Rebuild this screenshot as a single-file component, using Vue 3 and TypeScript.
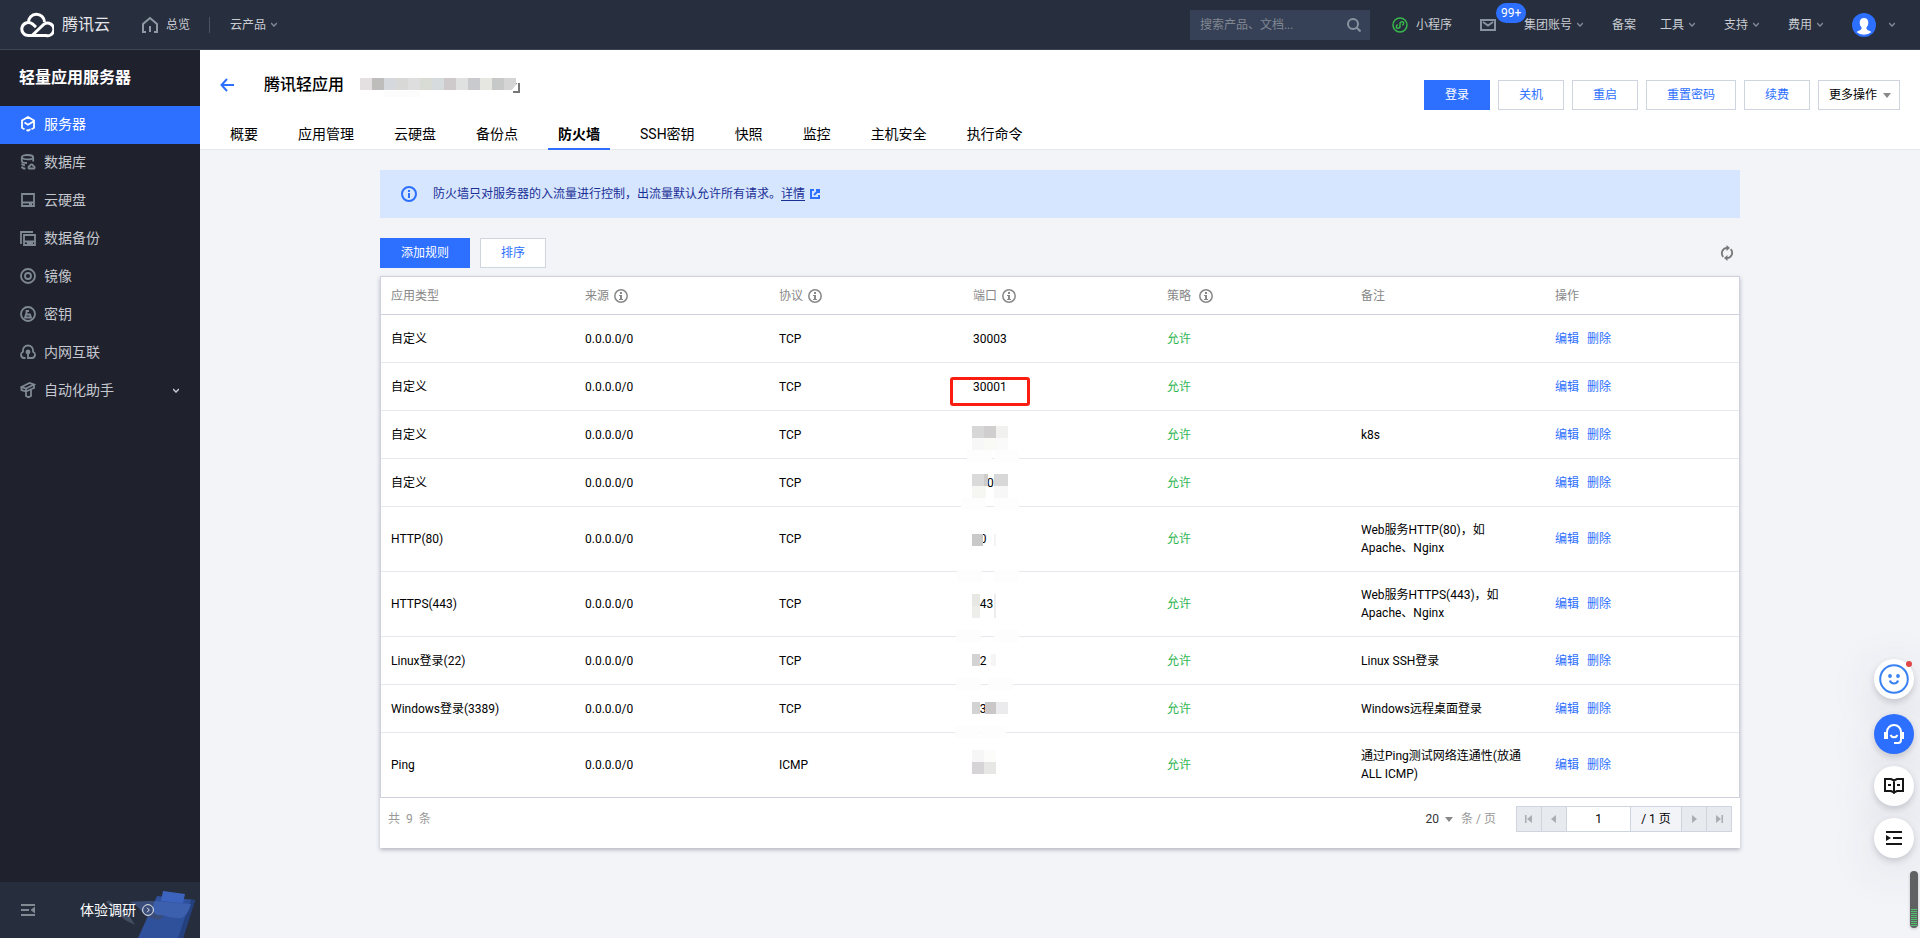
<script setup lang="ts">
interface Block { x: number; y: number; w: number; h: number; c: string }
interface Rule {
  type: string
  protocol: string
  port: string
  note: string
  marked?: boolean
  indented?: boolean
  blocks?: Block[]
}

const b = (x: number, y: number, w: number, h: number, c: string): Block => ({ x, y, w, h, c })

const topMenus = [
  { label: '集团账号', caret: true },
  { label: '备案', caret: false },
  { label: '工具', caret: true },
  { label: '支持', caret: true },
  { label: '费用', caret: true },
]
const sideItems = ['服务器', '数据库', '云硬盘', '数据备份', '镜像', '密钥', '内网互联', '自动化助手']
const tabs = ['概要', '应用管理', '云硬盘', '备份点', '防火墙', 'SSH密钥', '快照', '监控', '主机安全', '执行命令']
const actions = ['关机', '重启', '重置密码', '续费']
const nameBlocks = ['#e4e0e1', '#bfbdbc', '#d5d8dc', '#d8d8d6', '#dededf', '#d9dbd5', '#d6dbde', '#cec9ca', '#dfe1e0', '#c9cacd', '#e7e7e2', '#c7c9c8', '#d5d5d5']
const columns = [
  { label: '应用类型', info: false },
  { label: '来源', info: true },
  { label: '协议', info: true },
  { label: '端口', info: true },
  { label: '策略', info: true, wide: true },
  { label: '备注', info: false },
  { label: '操作', info: false },
]
const veil = '#fdfdfd'
const rules: Rule[] = [
  { type: '自定义', protocol: 'TCP', port: '30003', note: '' },
  { type: '自定义', protocol: 'TCP', port: '30001', note: '', marked: true },
  {
    type: '自定义', protocol: 'TCP', port: '', note: 'k8s',
    blocks: [b(9, 15, 12, 12, '#d8d7d8'), b(21, 15, 12, 12, '#d0cecf'), b(33, 15, 12, 12, '#f1f1f0'), b(9, 27, 12, 12, '#f7f7f7'), b(21, 27, 12, 12, '#f9f9f6'), b(33, 27, 12, 12, '#fafafa'), b(4, 39, 25, 12, veil), b(31, 39, 25, 12, veil)],
  },
  {
    type: '自定义', protocol: 'TCP', port: '0', note: '', indented: true,
    blocks: [b(9, 15, 12, 12, '#dadadb'), b(21, 15, 4, 12, '#cdcccb'), b(31, 15, 14, 12, '#d9d8d8'), b(9, 27, 14, 12, '#f6f6f3'), b(31, 27, 14, 12, '#f7f7f7'), b(-2, 39, 25, 12, veil), b(31, 39, 25, 12, veil)],
  },
  {
    type: 'HTTP(80)', protocol: 'TCP', port: '80', note: 'Web服务HTTP(80)，如Apache、Nginx',
    blocks: [b(9, 27, 11, 12, '#c9c9c9'), b(31, 27, 2, 12, '#f4f4f4'), b(-6, 63, 25, 12, veil), b(31, 63, 25, 12, veil)],
  },
  {
    type: 'HTTPS(443)', protocol: 'TCP', port: '443', note: 'Web服务HTTPS(443)，如Apache、Nginx',
    blocks: [b(9, 22, 8, 12, '#e7e7e3'), b(9, 34, 8, 12, '#ededea'), b(31, 22, 2, 24, '#ededed'), b(-7, 58, 25, 12, veil), b(31, 58, 25, 12, veil)],
  },
  {
    type: 'Linux登录(22)', protocol: 'TCP', port: '22', note: 'Linux SSH登录',
    blocks: [b(9, 17, 8, 12, '#d4d3d3'), b(28, 17, 5, 12, '#f5f5f6'), b(-7, 41, 25, 12, veil), b(25, 41, 25, 12, veil)],
  },
  {
    type: 'Windows登录(3389)', protocol: 'TCP', port: '3389', note: 'Windows远程桌面登录',
    blocks: [b(9, 17, 8, 12, '#d4d3d3'), b(22, 17, 11, 12, '#c9c7c7'), b(33, 17, 12, 12, '#ebebee'), b(-8, 41, 25, 12, veil), b(18, 41, 25, 12, veil)],
  },
  {
    type: 'Ping', protocol: 'ICMP', port: '', note: '通过Ping测试网络连通性(放通ALL ICMP)',
    blocks: [b(9, 17, 12, 12, '#f6f6f7'), b(21, 17, 12, 12, '#fcfcfa'), b(9, 29, 12, 12, '#d6d4d6'), b(21, 29, 12, 12, '#e7e7e5')],
  },
]
</script>

<template>
  <div class="page">
    <header class="topbar">
      <a class="logo" href="#">
        <svg width="34" height="26" viewBox="0 0 34 26" fill="none" stroke="#fff" stroke-width="3">
          <path d="M8.500 10.500A8 8 0 0 1 24.500 10" />
          <path d="M12 23.500L22.500 13.500A6.300 6.300 0 1 1 26 23.500H8.500A6.500 6.500 0 1 1 12.500 12L16 15.200" />
        </svg>
        <span>腾讯云</span>
      </a>
      <a class="top-link home" href="#">
        <svg width="18" height="18" viewBox="0 0 18 18" fill="none" stroke="#8e99a3" stroke-width="2"><path d="M5 16H2V8L9 2l7 6v8h-3M9 10v6" /></svg>
        总览
      </a>
      <span class="divider"></span>
      <a class="top-link" href="#">云产品<svg class="chev" width="6" height="5" viewBox="0 0 6 5"><path d="M0 1l3 3 3-3" /></svg></a>
      <div class="top-right">
        <label class="search">
          <input type="text" placeholder="搜索产品、文档..." aria-label="搜索产品、文档" />
          <svg width="14" height="14" viewBox="0 0 14 14" fill="none" stroke="#8892a0" stroke-width="2"><circle cx="6" cy="6" r="5" /><path d="M9.500 9.500l4 4" /></svg>
        </label>
        <a class="top-link mini" href="#">
          <svg width="16" height="16" viewBox="0 0 16 16" fill="none" stroke="#38b64b" stroke-width="1.500"><circle cx="8" cy="8" r="7" /><path d="M5.800 7.800c-2 .6-2 3.400 0 3.400 1.300 0 2.200-.8 2.200-2V6.700c0-1.200.9-2 2.200-2 2 0 2 2.800 0 3.400" /></svg>
          小程序
        </a>
        <a class="mail" href="#" aria-label="消息">
          <svg width="16" height="12" viewBox="0 0 16 12" fill="none" stroke="#8892a0" stroke-width="2"><path d="M1 1h14v10H1zM3 3l5 3.500L13 3" /></svg>
          <span class="badge">99+</span>
        </a>
        <a v-for="m in topMenus" :key="m.label" class="top-link menu" :class="{ plain: !m.caret }" href="#">{{ m.label }}<svg v-if="m.caret" class="chev" width="6" height="5" viewBox="0 0 6 5"><path d="M0 1l3 3 3-3" /></svg></a>
        <a class="top-link user" href="#" aria-label="账号">
          <svg width="24" height="24" viewBox="0 0 24 24"><circle cx="12" cy="12" r="12" fill="#2d6fff" /><path d="M12 5c-3 0-4.500 2-4.300 5 .2 2.600 1.300 3.600 1.800 4.600.5 1.600-.6 2.400-5 4.400a11.500 11.500 0 0 0 15 0c-4.400-2-5.500-2.800-5-4.400.5-1 1.600-2 1.800-4.600C16.500 7 15 5 12 5z" fill="#fff" /></svg>
          <svg class="chev" width="6" height="5" viewBox="0 0 6 5"><path d="M0 1l3 3 3-3" /></svg>
        </a>
      </div>
    </header>

    <div class="body">
      <aside class="sidebar">
        <h2>轻量应用服务器</h2>
        <nav>
          <a v-for="(item, i) in sideItems" :key="item" href="#" :class="{ active: i === 0 }">
            <svg class="side-icon" width="16" height="16" viewBox="0 0 16 16" fill="none" stroke="currentColor" stroke-width="1.800">
              <template v-if="i === 0"><path d="M4.500 13.300L2 11.800V4.500L8 1l6 3.500v7.300l-2.500 1.500M4.500 6.500L8 8.700l5.500-3.200M6.500 13.800L8 14.800l2.500-1.500" /></template>
              <template v-else-if="i === 1"><ellipse cx="7.500" cy="3.200" rx="5.700" ry="2.200" /><path d="M1.800 3.500V7c0 1.200 2 2 5.200 2M13.200 3.500v4M1.800 9.500c.2 1 1.200 1.500 3.200 1.800M1.800 12.500c.2 1.300 1.200 2 3.700 2.200M9 14.500h5.200c1-1 .3-2.700-1-2.700-.3-2-3-2-3.200 0-1.600.2-2 1.900-1 2.700z" /></template>
              <template v-else-if="i === 2"><path d="M2 2h12v12H2zM2 10.500h12M9 12h3" /></template>
              <template v-else-if="i === 3"><path d="M1 14V2h12M4 5h11v10H4zM4 11.500h11M7 13.200h6" /></template>
              <template v-else-if="i === 4"><circle cx="8" cy="8" r="7" /><circle cx="8" cy="8" r="3" /></template>
              <template v-else-if="i === 5"><circle cx="8" cy="8" r="7" /><path d="M6.500 8V5H9M5 11.500l1-3h4l1 3z" /></template>
              <template v-else-if="i === 6"><path d="M5.500 14H4a3.300 3.300 0 0 1-1-6.300C2.500 4 5 1.500 8 1.500S13.500 4 13 7.700A3.300 3.300 0 0 1 12 14H8V8" /><circle cx="8" cy="8" r="1.500" fill="currentColor" /></template>
              <template v-else><path d="M1.500 5l8-4 4.500 1.500-8 4zM1.500 5v3l4.500 1.500v-3M14 2.500V6L6 9.500M6 10v4l2.500 1.300L11 14V8" /></template>
            </svg>
            <span>{{ item }}</span>
            <svg v-if="i === 7" class="chev bright" width="6" height="5" viewBox="0 0 6 5"><path d="M0 1l3 3 3-3" /></svg>
          </a>
        </nav>
        <div class="side-foot">
          <button type="button" class="fold" aria-label="收起">
            <svg width="14" height="12" viewBox="0 0 14 12" fill="#818992"><path d="M0 0h14v2H0zM0 5h8v2H0zM0 10h14v2H0zM14 2.500v7L9.500 6z" /></svg>
          </button>
          <a class="survey" href="#">体验调研
            <svg width="12" height="12" viewBox="0 0 12 12" fill="none" stroke="#e8ebf0"><circle cx="6" cy="6" r="5.400" /><path d="M5 3.700L7.300 6 5 8.300" /></svg>
          </a>
          <svg class="clip" width="95" height="48" viewBox="0 0 95 48">
            <path d="M6 12q2-3 5 0l19 15 5 8-10-5z" fill="#434e62" />
            <path d="M57 6l38 4-12 38H38z" fill="#2f509b" />
            <path d="M91 10l4 0-12 38h-5z" fill="#24407f" />
            <path d="M29 12c9-1 18-1 26-1l14 10-10 9-11-3c-7-3-8-12-19-15z" fill="#3a4c78" />
            <path d="M55 11l36 3c-3 10-7 15-14 14-10 0-10-3-18-3-6 0-8-8-4-14z" fill="#3c5fae" />
            <path d="M63 1l22 3-2 9-22-2z" fill="#3c64be" />
          </svg>
        </div>
      </aside>

      <main>
        <section class="page-head">
          <div class="head-row">
            <button type="button" class="back" aria-label="返回">
              <svg width="14" height="14" viewBox="0 0 14 14" fill="none" stroke="#2d6fff" stroke-width="2"><path d="M7 1L1.500 7 7 13M2 7h12" /></svg>
            </button>
            <h1>腾讯轻应用</h1>
            <svg class="mosaic" width="162" height="20" viewBox="0 0 162 20">
              <path d="M153 14h6V6h-4" fill="none" stroke="#777" stroke-width="2" />
              <rect v-for="(c, i) in nameBlocks" :key="i" :x="i * 12" y="0" width="12" height="12" :fill="c" />
              <path d="M152 12l6-8v9h-6z" fill="#fff" />
              <rect x="24" y="13" width="36" height="6" fill="#fcfcfc" />
            </svg>
            <div class="actions">
              <button type="button" class="btn primary">登录</button>
              <button v-for="a in actions" :key="a" type="button" class="btn">{{ a }}</button>
              <button type="button" class="btn more">更多操作<i class="tri"></i></button>
            </div>
          </div>
          <nav class="tabs">
            <a v-for="t in tabs" :key="t" href="#" :class="{ active: t === '防火墙' }">{{ t }}</a>
          </nav>
        </section>

        <section class="content">
          <div class="alert">
            <svg width="16" height="16" viewBox="0 0 16 16"><circle cx="8" cy="8" r="7" fill="none" stroke="#2d6fff" stroke-width="2" /><path d="M7 4h2v2H7zM7 7h2v5H7z" fill="#2d6fff" /></svg>
            <p>防火墙只对服务器的入流量进行控制，出流量默认允许所有请求。<a href="#">详情</a></p>
            <svg class="ext" width="10" height="10" viewBox="0 0 10 10" fill="none" stroke="#2d6fff" stroke-width="2"><path d="M4 1H1v8h8V6M6 1h3v3M9 1L4 6" /></svg>
          </div>

          <div class="toolbar">
            <button type="button" class="btn primary">添加规则</button>
            <button type="button" class="btn">排序</button>
            <button type="button" class="refresh" aria-label="刷新">
              <svg width="14" height="16" viewBox="0 0 14 16" fill="none" stroke="#777" stroke-width="1.800"><path d="M3.300 11.800A5.300 5.300 0 0 1 7 2.900M10.700 4.200A5.300 5.300 0 0 1 7 13.100" /><path d="M6.500 0l3.500 3-3.500 3zM7.500 10v6L4 13z" fill="#777" stroke="none" /></svg>
            </button>
          </div>

          <div class="card">
            <table>
              <thead>
                <tr>
                  <th v-for="c in columns" :key="c.label" scope="col">
                    <span class="th" :class="{ wide: c.wide }">{{ c.label }}
                      <svg v-if="c.info" width="14" height="14" viewBox="0 0 14 14"><circle cx="7" cy="7" r="6.200" fill="none" stroke="#888" stroke-width="1.500" /><path d="M6 3h2v2H6zM5 6h3v4h1v1H5v-1h1V7H5z" fill="#888" /></svg>
                    </span>
                  </th>
                </tr>
              </thead>
              <tbody>
                <tr v-for="(r, i) in rules" :key="i">
                  <td>{{ r.type }}</td>
                  <td>0.0.0.0/0</td>
                  <td>{{ r.protocol }}</td>
                  <td class="port">
                    <span :class="{ indented: r.indented }">{{ r.port }}</span>
                    <svg v-if="r.blocks" class="cover" width="60" height="40">
                      <rect v-for="(k, n) in r.blocks" :key="n" :x="k.x" :y="k.y" :width="k.w" :height="k.h" :fill="k.c" />
                    </svg>
                    <i v-if="r.marked" class="mark"></i>
                  </td>
                  <td class="allow">允许</td>
                  <td class="note">{{ r.note }}</td>
                  <td><div class="ops"><a href="#">编辑</a><a href="#">删除</a></div></td>
                </tr>
              </tbody>
            </table>
            <footer class="pager">
              <span class="total">共<b>9</b>条</span>
              <button type="button" class="size">20<i class="tri"></i></button>
              <span class="unit">条 / 页</span>
              <div class="pages">
                <button type="button" aria-label="首页"><svg width="8" height="10" viewBox="0 0 8 10" fill="#a9adb4"><path d="M0 1h1.500v8H0zM7 1v8L2 5z" /></svg></button>
                <button type="button" aria-label="上一页"><svg width="8" height="10" viewBox="0 0 8 10" fill="#a9adb4"><path d="M6 1v8L1 5z" /></svg></button>
                <input type="text" value="1" aria-label="页码" />
                <span>/ 1 页</span>
                <button type="button" aria-label="下一页"><svg width="8" height="10" viewBox="0 0 8 10" fill="#a9adb4"><path d="M2 1v8l5-4z" /></svg></button>
                <button type="button" aria-label="末页"><svg width="8" height="10" viewBox="0 0 8 10" fill="#a9adb4"><path d="M6.500 1H8v8H6.500zM1 1v8l5-4z" /></svg></button>
              </div>
            </footer>
          </div>
        </section>
      </main>
    </div>

    <div class="floats">
      <button type="button" class="smile" aria-label="反馈">
        <svg width="30" height="30" viewBox="0 0 30 30" fill="none" stroke="#3a82f2" stroke-width="2"><circle cx="15" cy="15" r="13.800" /><path d="M11 16.500c1 4 7 4 8 0" stroke-width="2.200" /><circle cx="11" cy="12" r="1.900" fill="#3a82f2" stroke="none" /><circle cx="19" cy="12" r="1.900" fill="#3a82f2" stroke="none" /></svg>
        <i class="dot"></i>
      </button>
      <button type="button" class="blue" aria-label="客服">
        <svg width="20" height="20" viewBox="0 0 20 20" fill="none" stroke="#fff" stroke-width="2"><path d="M3 14V8a7 7 0 0 1 14 0v8q0 3-3 3h-4M6.500 11c1.500 3 5.500 3 7 0" /><path d="M0 8h4v7H0zM16 8h4v7h-4z" fill="#fff" stroke="none" /></svg>
      </button>
      <button type="button" aria-label="文档">
        <svg width="20" height="16" viewBox="0 0 20 16" fill="none" stroke="#161616" stroke-width="2"><path d="M1 1h6l3 1.500L13 1h6v12h-6l-3 1.500L7 13H1zM10 2v14M4 7h3M13 7h3" /></svg>
      </button>
      <button type="button" aria-label="目录">
        <svg width="16" height="14" viewBox="0 0 16 14" fill="#161616"><path d="M0 0h16v2H0zM7 6h9v2H7zM0 12h16v2H0zM0 4v6l5-3z" /></svg>
      </button>
    </div>
    <div class="meter"><i></i></div>
  </div>
</template>

<style>
body { background: #f3f4f8; }
</style>

<style scoped>
* { box-sizing: border-box; }
.page { min-height: 100vh; display: flex; flex-direction: column; font: 12px/18px Roboto, "Noto Sans CJK SC", sans-serif; color: #000; background: #f3f4f8; }
a { color: inherit; text-decoration: none; }
button, input { font: inherit; color: inherit; border: 0; background: none; padding: 0; margin: 0; border-radius: 0; }
svg { display: block; flex: none; }
h1, h2, p { margin: 0; }

.topbar { height: 50px; flex: none; display: flex; align-items: center; padding-left: 20px; background: #272e3e; border-bottom: 1px solid #3b4454; color: #c9ccd2; }
.logo { display: flex; align-items: center; gap: 8px; color: #e4e6ea; font-size: 16px; line-height: 24px; }
.top-link { display: flex; align-items: center; white-space: nowrap; }
.home { gap: 7px; margin-left: 31px; }
.divider { width: 1px; height: 16px; margin: 0 20px 0 19px; background: #4a5263; }
.chev { margin-left: 5px; fill: none; stroke: #7f8894; stroke-width: 1.5; }
.chev.bright { margin: 0 21px 0 auto; stroke: #c5cbd3; }
.top-right { margin-left: auto; display: flex; align-items: center; padding-right: 25px; }
.search { width: 180px; height: 30px; display: flex; align-items: center; padding: 0 9px 0 10px; background: #364157; }
.search input { flex: 1; min-width: 0; outline: 0; color: #c9ccd2; }
.search input::placeholder { color: #818791; opacity: 1; }
.mini { gap: 8px; margin-left: 22px; }
.mail { position: relative; margin-left: 28px; margin-right: 28px; }
.badge { position: absolute; left: 16px; top: -16px; padding: 0 5px; height: 20px; border-radius: 10px; background: #2d6fff; color: #fff; line-height: 20px; }
.menu + .menu { margin-left: 29px; }
.plain + .menu { margin-left: 24px; }
.user { margin-left: 29px; }
.user .chev { margin-left: 13px; }

.body { flex: 1; display: flex; }
.sidebar { width: 200px; flex: none; display: flex; flex-direction: column; background: #1f212d; color: #c5c8ce; }
.sidebar h2 { padding: 16px 19px; font-size: 16px; line-height: 24px; font-weight: 700; color: #fff; }
.sidebar nav a { height: 38px; display: flex; align-items: center; gap: 8px; padding: 0 0 2px 20px; font-size: 14px; line-height: 20px; }
.side-icon { color: #7f8993; }
.sidebar nav a.active { background: #2d6fff; color: #fff; }
.active .side-icon { color: #fff; }
.side-foot { position: relative; margin-top: auto; height: 56px; display: flex; align-items: center; padding-left: 21px; background: #262e3d; overflow: hidden; }
.survey { position: relative; z-index: 1; display: flex; align-items: center; gap: 6px; margin-left: 45px; color: #fff; font-size: 14px; line-height: 20px; }
.clip { position: absolute; right: 5px; bottom: 0; }

main { flex: 1; min-width: 0; }
.page-head { height: 100px; display: flex; flex-direction: column; background: #fff; border-bottom: 1px solid #e5e8ee; }
.head-row { height: 70px; flex: none; display: flex; align-items: center; padding: 0 20px; }
h1 { font-size: 16px; line-height: 24px; font-weight: 500; margin-left: 30px; }
.mosaic { margin-left: 16px; margin-top: 6px; }
.actions { display: flex; gap: 8px; margin-left: auto; padding-top: 20px; }
.btn { height: 30px; padding: 0 20px; border: 1px solid #cfd5de; background: #fff; color: #2d6fff; white-space: nowrap; }
.btn.primary { background: #2d6fff; border-color: #2d6fff; color: #fff; }
.btn.more { display: flex; align-items: center; padding: 0 8px 0 10px; color: #000; }
.tri { border: 4px solid transparent; border-top: 5px solid #888; border-bottom: 0; margin-left: 6px; }
.tabs { display: flex; gap: 20px; padding-left: 20px; margin-bottom: -1px; }
.tabs a { height: 30px; padding: 0 10px; font-size: 14px; line-height: 28px; border-bottom: 2px solid transparent; white-space: nowrap; }
.tabs a.active { font-weight: 700; border-color: #2d6fff; }

.content { max-width: 1400px; margin: 0 auto; padding: 20px; }
.alert { min-height: 48px; display: flex; align-items: center; padding: 0 20px 0 21px; background: #d6e6ff; color: #1a2f96; }
.alert p { margin-left: 16px; }
.alert a { text-decoration: underline; text-underline-offset: 2px; }
.ext { margin-left: 5px; }
.toolbar { display: flex; align-items: center; gap: 10px; margin: 20px 0 8px; }
.refresh { margin: 0 6px 0 auto; }

.card { background: #fff; box-shadow: 0 2px 4px rgba(54, 58, 80, .32); }
table { width: 100%; table-layout: fixed; border-collapse: separate; border-spacing: 0; border: 1px solid #cfd2de; border-bottom: 0; }
th { height: 38px; padding: 0 10px; border-bottom: 1px solid #cfd2de; text-align: left; font-weight: 400; color: #888; }
.th { display: flex; align-items: center; gap: 5px; }
.th.wide { gap: 8px; }
td { height: 48px; padding: 14px 10px; border-bottom: 1px solid #e5e8ed; vertical-align: middle; }
tbody tr:last-child td { border-bottom-color: #cfd2de; }
td.note { padding-right: 24px; }
.port { position: relative; }
.indented { padding-left: 14px; }
.cover { position: absolute; left: 0; top: 0; overflow: visible; }
.mark { position: absolute; left: -13px; top: 14px; width: 80px; height: 29px; border: 3px solid #fb1d10; border-radius: 3px; }
.allow { color: #2fb552; }
.ops { display: flex; gap: 8px; color: #2d6fff; }

.pager { display: flex; align-items: center; min-height: 50px; padding: 0 8px 8px; color: #999; }
.total b { margin: 0 6px; font-weight: 400; }
.size { display: flex; align-items: center; margin-left: auto; color: #333; }
.unit { margin: 0 20px 0 8px; }
.pages { display: flex; height: 26px; border: 1px solid #cfd5de; color: #000; }
.pages > * { display: flex; align-items: center; justify-content: center; height: 24px; }
.pages > * + * { border-left: 1px solid #cfd5de; }
.pages button { width: 25px; background: #e7eaef; }
.pages button:first-child { width: 24px; }
.pages input { width: 64px; text-align: center; background: #fff; outline: 0; }
.pages span { width: 51px; background: #f3f4f8; }

.floats { position: fixed; right: 6px; bottom: 80px; display: flex; flex-direction: column; gap: 12px; }
.floats button { position: relative; width: 40px; height: 40px; display: flex; align-items: center; justify-content: center; border-radius: 50%; background: #fff; box-shadow: 0 3px 6px rgba(54, 58, 80, .2), 0 10px 50px rgba(54, 58, 80, .14); }
.floats .smile { margin-bottom: 3px; }
.floats .blue { background: #2d6fff; }
.dot { position: absolute; right: 2px; top: 2px; width: 6px; height: 6px; border-radius: 50%; background: #e04848; }
.meter { position: fixed; right: 2px; bottom: 10px; width: 8px; height: 57px; padding: 0 1px 1px; border-radius: 4px; background: #606163; box-shadow: 0 1px 3px rgba(0, 0, 0, .2); overflow: hidden; display: flex; align-items: flex-end; }
.meter i { width: 100%; height: 18px; background: repeating-linear-gradient(#4fc06b 0 1px, #606163 1px 2px); }
</style>
